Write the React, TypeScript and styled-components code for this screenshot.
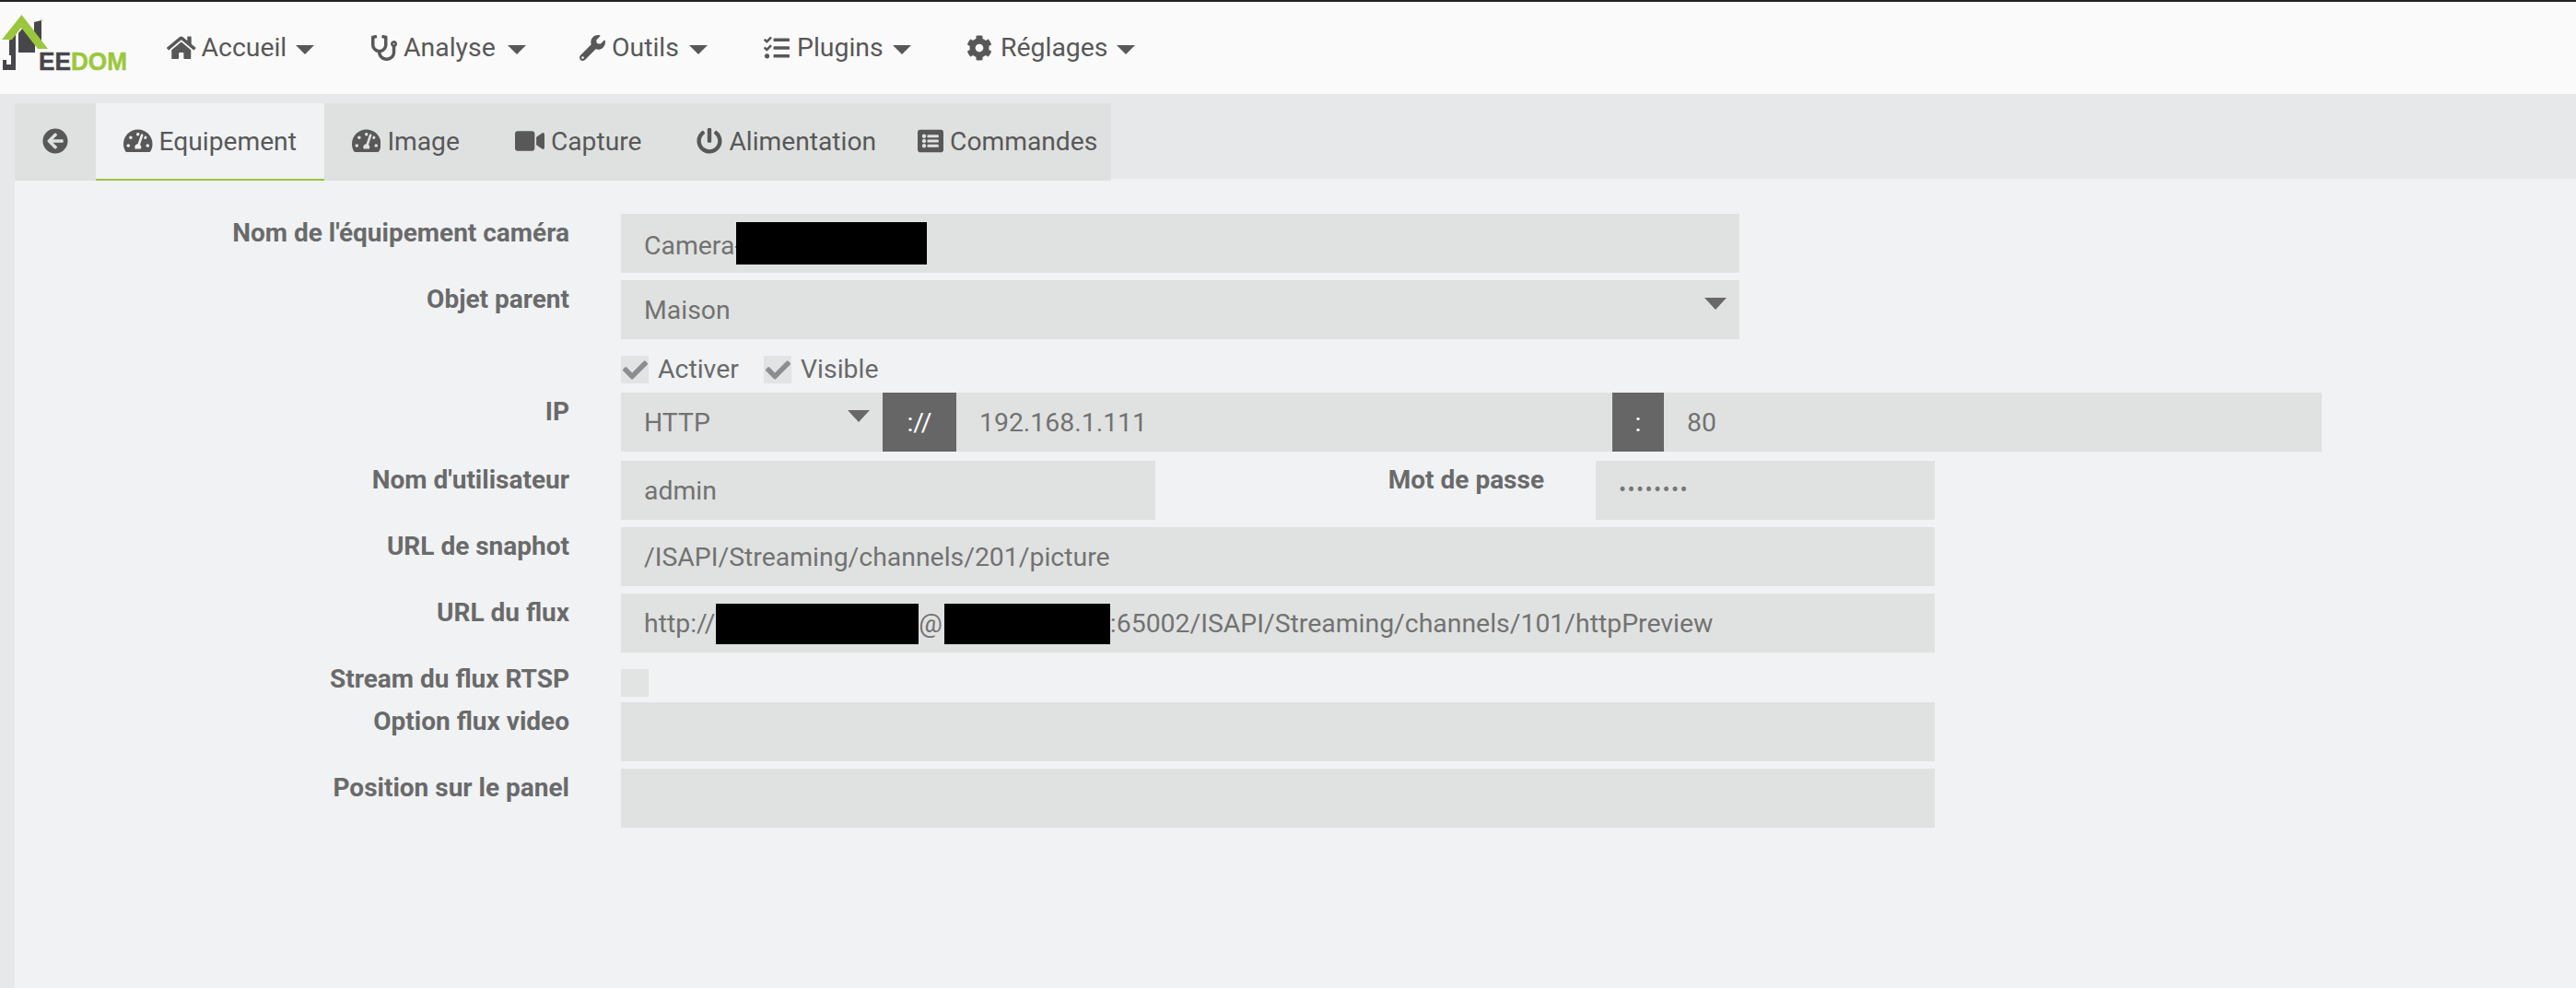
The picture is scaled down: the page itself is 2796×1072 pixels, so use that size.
import React from "react";
import styled, { createGlobalStyle } from "styled-components";
import {
  FaArrowCircleLeft,
  FaCheck,
  FaCog,
  FaHome,
  FaListAlt,
  FaPowerOff,
  FaStethoscope,
  FaTachometerAlt,
  FaTasks,
  FaVideo,
  FaWrench,
} from "react-icons/fa";

const GlobalStyle = createGlobalStyle`
  html, body {
    margin: 0;
    padding: 0;
    background: #e7e8ea;
  }
  * {
    box-sizing: border-box;
  }
`;

const Page = styled.div`
  display: flex;
  flex-direction: column;
  min-height: 1072px;
  font-family: Roboto, "Liberation Sans", sans-serif;
  font-size: 28.4px;
  color: #585858;
`;

const TopBar = styled.header`
  display: flex;
  align-items: center;
  height: 102px;
  border-top: 2px solid #222;
  background: #fafafa;
`;

const LogoBox = styled.svg`
  align-self: flex-start;
  flex: none;
  width: 150px;
  height: 72px;
  margin-top: 14px;
  margin-right: 31px;
`;

const NavItem = styled.div<{ $gap: number; $w: number }>`
  display: flex;
  align-items: center;
  width: ${(p) => p.$w}px;
  gap: ${(p) => p.$gap}px;
  line-height: 40px;

  svg {
    flex: none;
    font-size: 28px;
  }
`;

const Caret = styled.span<{ $ml?: number }>`
  flex: none;
  width: 0;
  height: 0;
  margin-left: ${(p) => p.$ml ?? 4}px;
  margin-top: 4px;
  border-left: 10px solid transparent;
  border-right: 10px solid transparent;
  border-top: 10px solid #585858;
`;

const TabZone = styled.div`
  height: 92px;
  padding: 10px 0 0 16px;
`;

const TabBar = styled.nav`
  position: relative;
  display: inline-flex;
  height: 84px;
  background: #dfe1e0;
`;

const Tab = styled.div<{ $active?: boolean; $pad?: number }>`
  display: flex;
  align-items: center;
  gap: 7px;
  height: 84px;
  padding: 0 ${(p) => p.$pad ?? 30}px;
  font-size: 28.2px;
  line-height: 40px;
  background: ${(p) => (p.$active ? "#f0f2f4" : "transparent")};
  border-bottom: 2px solid ${(p) => (p.$active ? "#9bc73d" : "transparent")};

  svg {
    flex: none;
    font-size: 28px;
  }

  span {
    margin-top: 2px;
  }
`;

const Body = styled.main`
  flex: 1;
  margin-left: 16px;
  padding-top: 38px;
  background: #f0f2f4;
`;

const Row = styled.div<{ $mt?: number }>`
  display: flex;
  margin-top: ${(p) => p.$mt ?? 8}px;
`;

const Label = styled.label<{ $w?: number; $up?: number }>`
  flex: none;
  width: ${(p) => p.$w ?? 602}px;
  margin-right: 56px;
  margin-top: ${(p) => 6 - (p.$up ?? 0)}px;
  font-size: 28px;
  font-weight: 700;
  line-height: 30px;
  text-align: right;
  color: #6a6a6a;
`;

const Field = styled.div<{ $w?: number; $drop?: number }>`
  display: flex;
  align-items: center;
  flex: none;
  width: ${(p) => p.$w ?? 1426}px;
  height: 64px;
  padding: ${(p) => p.$drop ?? 0}px 25px 0;
  background: #e0e2e1;
  color: #727272;
  white-space: nowrap;
`;

const SelectField = styled(Field)`
  justify-content: space-between;
  padding-right: 14px;
`;

const SelectCaret = styled.span`
  align-self: flex-start;
  width: 0;
  height: 0;
  margin-top: 19px;
  border-left: 12px solid transparent;
  border-right: 12px solid transparent;
  border-top: 13px solid #686868;
`;

const Addon = styled.div<{ $w: number }>`
  display: flex;
  align-items: center;
  justify-content: center;
  flex: none;
  width: ${(p) => p.$w}px;
  height: 64px;
  background: #666;
  color: #fff;
`;

const Redacted = styled.span<{ $w: number; $h: number; $ml?: number; $mt?: number }>`
  display: inline-block;
  flex: none;
  width: ${(p) => p.$w}px;
  height: ${(p) => p.$h}px;
  margin-left: ${(p) => p.$ml ?? 0}px;
  margin-top: ${(p) => p.$mt ?? 0}px;
  background: #000;
`;

const Dots = styled.span`
  margin-top: -2px;
  font-size: 24px;
  letter-spacing: 1.4px;
  color: #777;
`;

const CheckRow = styled.div`
  display: flex;
  align-items: center;
  height: 30px;
  margin-top: 18px;
  margin-left: 658px;
  color: #6a6a6a;
`;

const CheckBox = styled.span`
  display: flex;
  align-items: center;
  justify-content: center;
  flex: none;
  width: 30px;
  height: 30px;
  background: #e2e3e3;
  color: #8b8d91;

  svg {
    font-size: 27px;
  }
`;

const CheckText = styled.span<{ $w: number }>`
  width: ${(p) => p.$w}px;
  margin-top: -2px;
  margin-left: 10px;
`;

const Logo = () => (
  <LogoBox viewBox="0 0 150 72">
    <polygon points="37,8 45,6 45,28 37,28" fill="#46464b" />
    <polygon points="20,20 25,14 38,27 38,41 20,41" fill="#46464b" />
    <polygon points="10,28 17,21 17,60 3,60 3,49 7,49 7,54 12,54 12,44 10,44" fill="#46464b" />
    <polygon points="23.5,0 2,27 13,27 23,14 41,37 52,37" fill="#9bc73d" />
    <polyline points="44,4 47,7" stroke="#bbb" strokeWidth="1" fill="none" />
    <text
      x="42"
      y="60"
      fontFamily="'Liberation Sans', sans-serif"
      fontWeight="700"
      fontSize="28"
      stroke="currentColor"
      textLength="96"
      lengthAdjust="spacingAndGlyphs"
      fill="#46464b"
      color="#46464b"
      strokeWidth="0.5"
    >
      EE
      <tspan fill="#9bc73d" color="#9bc73d">
        DOM
      </tspan>
    </text>
  </LogoBox>
);

const App: React.FC = () => {
  return (
    <Page>
      <GlobalStyle />
      <TopBar>
        <Logo />
        <NavItem $gap={6} $w={222}>
          <FaHome size={31.5} />
          <span>Accueil</span>
          <Caret />
        </NavItem>
        <NavItem $gap={7} $w={226}>
          <FaStethoscope />
          <span>Analyse</span>
          <Caret $ml={6} />
        </NavItem>
        <NavItem $gap={7} $w={200}>
          <FaWrench />
          <span>Outils</span>
          <Caret />
        </NavItem>
        <NavItem $gap={8} $w={220}>
          <FaTasks />
          <span>Plugins</span>
          <Caret $ml={2} />
        </NavItem>
        <NavItem $gap={9} $w={220}>
          <FaCog />
          <span>Réglages</span>
          <Caret $ml={0} />
        </NavItem>
      </TopBar>

      <TabZone>
        <TabBar>
          <Tab>
            <FaArrowCircleLeft />
          </Tab>
          <Tab $active>
            <FaTachometerAlt size={31.5} />
            <span>Equipement</span>
          </Tab>
          <Tab>
            <FaTachometerAlt size={31.5} />
            <span>Image</span>
          </Tab>
          <Tab>
            <FaVideo size={32} />
            <span>Capture</span>
          </Tab>
          <Tab>
            <FaPowerOff />
            <span>Alimentation</span>
          </Tab>
          <Tab $pad={15}>
            <FaListAlt />
            <span>Commandes</span>
          </Tab>
        </TabBar>
      </TabZone>

      <Body>
        <Row $mt={0}>
          <Label>Nom de l'équipement caméra</Label>
          <Field $w={1214} $drop={4}>
            Camera-
            <Redacted $w={207} $h={46} $ml={-6} $mt={-4} />
          </Field>
        </Row>
        <Row>
          <Label>Objet parent</Label>
          <SelectField $w={1214}>
            Maison
            <SelectCaret />
          </SelectField>
        </Row>
        <CheckRow>
          <CheckBox>
            <FaCheck />
          </CheckBox>
          <CheckText $w={115}>Activer</CheckText>
          <CheckBox>
            <FaCheck />
          </CheckBox>
          <CheckText $w={120}>Visible</CheckText>
        </CheckRow>
        <Row $mt={10}>
          <Label>IP</Label>
          <SelectField $w={284}>
            HTTP
            <SelectCaret />
          </SelectField>
          <Addon $w={80}>://</Addon>
          <Field $w={712}>192.168.1.111</Field>
          <Addon $w={56}>:</Addon>
          <Field $w={714}>80</Field>
        </Row>
        <Row $mt={10}>
          <Label>Nom d'utilisateur</Label>
          <Field $w={580}>admin</Field>
          <Label $w={422}>Mot de passe</Label>
          <Field $w={368}>
            <Dots>••••••••</Dots>
          </Field>
        </Row>
        <Row>
          <Label>URL de snaphot</Label>
          <Field>/ISAPI/Streaming/channels/201/picture</Field>
        </Row>
        <Row>
          <Label>URL du flux</Label>
          <Field>
            http://
            <Redacted $w={220} $h={44} $ml={1} $mt={2} />
            @
            <Redacted $w={180} $h={44} $ml={2} $mt={2} />
            :65002/ISAPI/Streaming/channels/101/httpPreview
          </Field>
        </Row>
        <Row $mt={18}>
          <Label $up={10}>Stream du flux RTSP</Label>
          <CheckBox />
        </Row>
        <Row $mt={6}>
          <Label>Option flux video</Label>
          <Field />
        </Row>
        <Row>
          <Label>Position sur le panel</Label>
          <Field />
        </Row>
      </Body>
    </Page>
  );
};

export default App;
